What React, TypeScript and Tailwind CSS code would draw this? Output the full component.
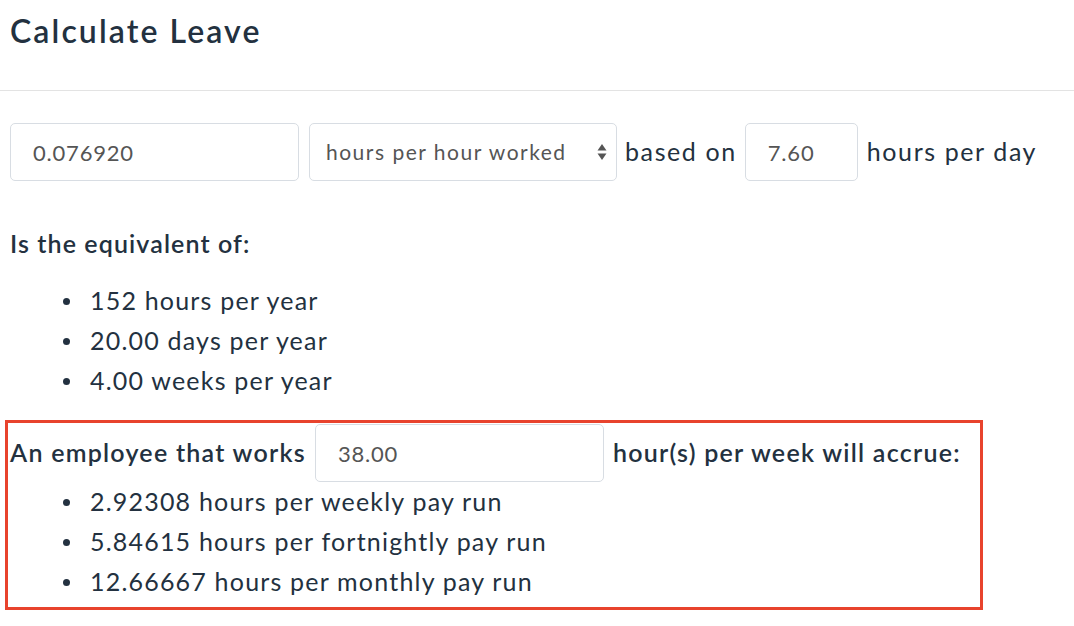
const ink = 'text-[#233140]'

function Bullet({ children }: { children: React.ReactNode }) {
  return (
    <li className="flex items-center h-[40px]">
      <span className="w-[7px] h-[7px] rounded-full bg-[#233140] ml-[63px] mr-[20px]" />
      <span className="text-[25px] tracking-[1.2px]">{children}</span>
    </li>
  )
}

function Field({ value, width }: { value: string; width: string }) {
  return (
    <div className={`${width} h-[58px] border border-[#d8dde3] rounded-[5px] flex items-center pl-[22px] text-[22px] tracking-[0.8px] text-[#555] font-normal`}>
      {value}
    </div>
  )
}

export default function App() {
  return (
    <div className={`w-[1074px] h-[626px] bg-white font-['Lato',sans-serif] ${ink}`}>
      <header className="h-[91px] border-b border-[#e3e3e3] pl-[10px] pt-[12px]">
        <h1 className="text-[32px] leading-[38px] font-semibold tracking-[2.1px]">Calculate Leave</h1>
      </header>

      {/* entitlement row */}
      <div className="flex items-center pl-[10px] mt-[32px] text-[25px] tracking-[1.6px]">
        <Field value="0.076920" width="w-[289px]" />
        <div className="ml-[10px] w-[308px] h-[58px] border border-[#d8dde3] rounded-[5px] flex items-center justify-between pl-[16px] pr-[9px] text-[21px] tracking-[1.5px] text-[#555]">
          <span>hours per hour worked</span>
          <svg width="10" height="18" viewBox="0 0 10 18">
            <path d="M5 1 L9.5 7.5 H0.5 Z" fill="#555" />
            <path d="M5 17 L9.5 10.5 H0.5 Z" fill="#555" />
          </svg>
        </div>
        <span className="ml-[8px] mr-[8px]">based on</span>
        <Field value="7.60" width="w-[113px]" />
        <span className="ml-[9px]">hours per day</span>
      </div>

      <h2 className="pl-[10px] mt-[44px] text-[25px] leading-[36px] font-semibold tracking-[1.1px]">Is the equivalent of:</h2>
      <ul className="mt-[20px]">
        <Bullet>152 hours per year</Bullet>
        <Bullet>20.00 days per year</Bullet>
        <Bullet>4.00 weeks per year</Bullet>
      </ul>

      {/* highlighted accrual box */}
      <section className="ml-[5px] mt-[19px] w-[978px] border-[3px] border-[#e8432d] pt-[1px] pb-[5px]">
        <div className="flex items-center pl-[2px] text-[25px] font-semibold tracking-[1.25px]">
          <span>An employee that works</span>
          <div className="ml-[9px] mr-[9px]">
            <Field value="38.00" width="w-[289px]" />
          </div>
          <span>hour(s) per week will accrue:</span>
        </div>
        <ul className="-ml-[8px]">
          <Bullet>2.92308 hours per weekly pay run</Bullet>
          <Bullet>5.84615 hours per fortnightly pay run</Bullet>
          <Bullet>12.66667 hours per monthly pay run</Bullet>
        </ul>
      </section>
    </div>
  )
}
